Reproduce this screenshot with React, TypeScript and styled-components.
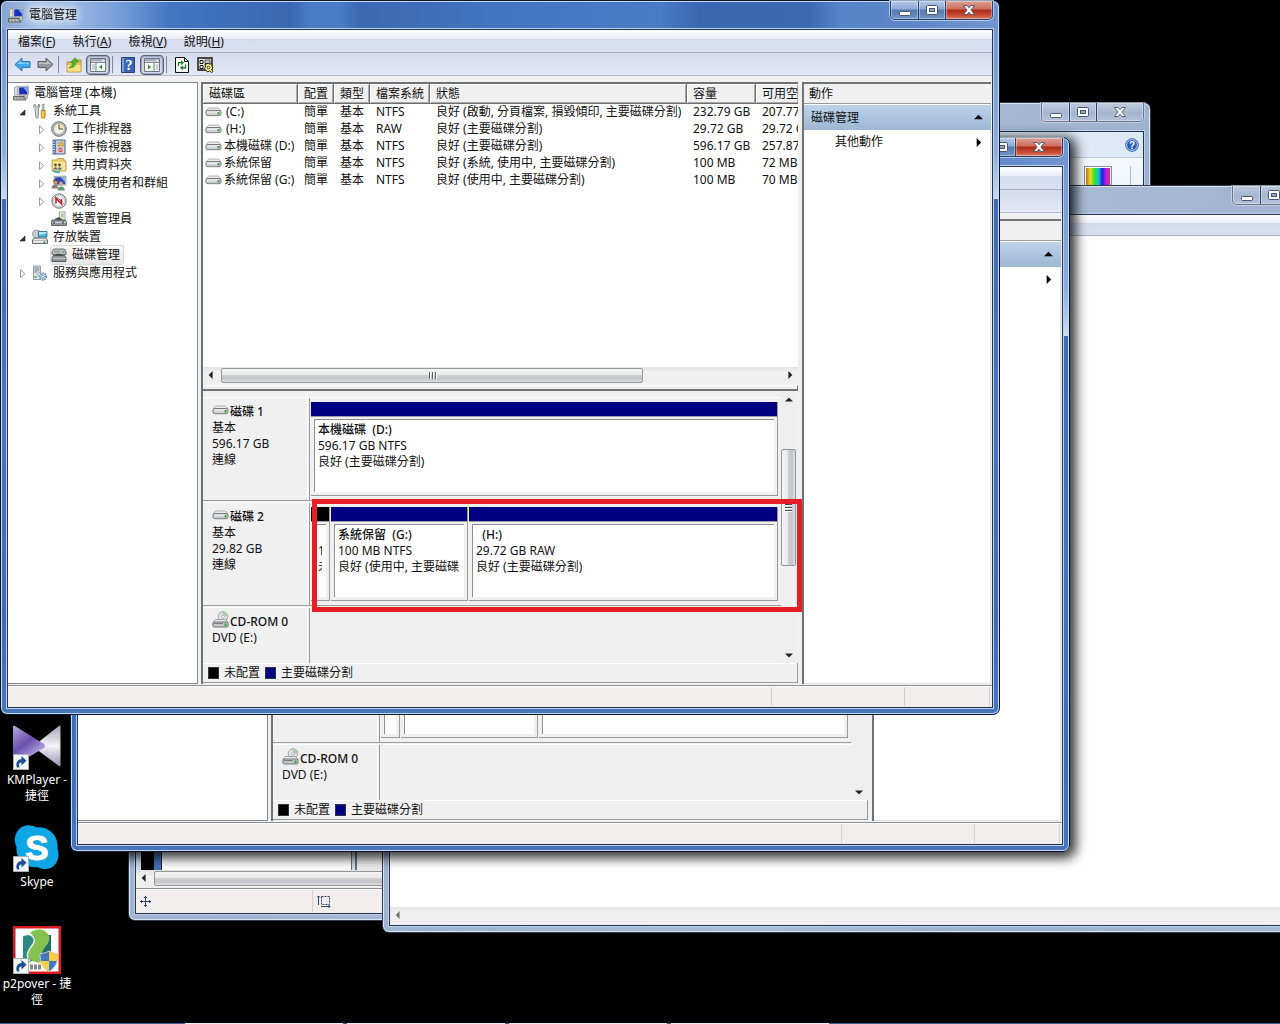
import React from 'react';
import styled, { createGlobalStyle, css } from 'styled-components';

const GlobalStyle = createGlobalStyle`
  *, *::before, *::after { box-sizing: border-box; }
  body {
    margin: 0;
    background: #000;
    color: #111;
    font: 12px/16px "Noto Sans", "Noto Sans CJK TC", sans-serif;
  }
  button {
    font: inherit;
    color: inherit;
    border: 0;
    padding: 0;
    background: none;
  }
  svg { display: block; flex: none; }
`;

/* ---------- desktop ---------- */

const Desktop = styled.main`
  position: relative;
  min-height: 100vh;
  overflow: hidden;
  background: #000;
`;

const Shortcuts = styled.nav`
  position: absolute;
  left: 0;
  top: 722px;
  width: 74px;
  display: grid;
  grid-auto-rows: 102px;
`;

const Shortcut = styled.button`
  display: flex;
  flex-direction: column;
  align-items: center;
  justify-content: flex-start;
  gap: 2px;
  color: #fff;
  text-align: center;
`;

const Taskbar = styled.footer`
  position: absolute;
  left: 0;
  right: 0;
  bottom: 0;
  height: 1px;
  display: flex;
  gap: 4px;
  padding-left: 185px;
  background: #3f5f94;
`;

const TaskEdge = styled.span`
  width: 158px;
  background: #e6ebf5;
`;

/* ---------- window frame ---------- */

const activeGlass = css`
  border-color: #0c1830;
  box-shadow: inset 0 0 0 1px #c4d8f2;
  background:
    linear-gradient(90deg, #86a5d4 0, #a9c2e6 40px, #8dafdf 90px, #6a95d3 130px, #4375c0 17%, #3c6bb5 26%, #3a68b0 29%, #4a7cc6 31%, #4a7bc5 34%, #3b69b1 36%, #4475c0 50%, #4a7bc5 66%, #3a68b0 70%, #3c6ab1 81%, #5484c9 84%, #5d86c8 91%, #7396d0 100%) 0 0 / 100% 28px no-repeat,
    linear-gradient(180deg, #7093cd 0, #7fa0d5 70px, #8eabd9 150px, #cbdcf2 198px, #3f6cb2 198px, #4776bc 420px, #3f6cb2 620px, #4876bb 100%);
`;

const inactiveGlass = css`
  border-color: #2c3a50;
  box-shadow: inset 0 0 0 1px #dbe5f2;
  background: linear-gradient(115deg, #a8b9d3 0, #9fb2cf 30%, #a9bad4 55%, #9db0cd 75%, #a9bad3 100%);
`;

const Frame = styled.section<{ $x: number; $y: number; $w: number; $h: number; $active?: boolean; $shadow?: boolean }>`
  position: absolute;
  left: ${p => p.$x}px;
  top: ${p => p.$y}px;
  width: ${p => p.$w}px;
  height: ${p => p.$h}px;
  display: flex;
  flex-direction: column;
  padding: 0 6px 6px;
  border: 1px solid;
  border-radius: 7px;
  ${p => (p.$active ? activeGlass : inactiveGlass)}
  ${p => p.$shadow && css`box-shadow: inset 0 0 0 1px #c4d8f2, 3px 3px 12px 3px rgba(0, 0, 0, 0.8);`}
`;

const TitleBar = styled.header`
  flex: none;
  height: 28px;
  display: flex;
  justify-content: space-between;
  align-items: flex-start;
`;

const Title = styled.h1`
  margin: 0;
  padding: 6px 0 0 1px;
  display: flex;
  gap: 5px;
  font-size: 12px;
  line-height: 16px;
  font-weight: 400;
  text-shadow: 0 0 6px #fff, 0 0 10px #fff, 0 0 12px #e4eefb;
`;

const Client = styled.div`
  flex: 1;
  min-height: 0;
  display: flex;
  flex-direction: column;
  border: 1px solid #22344f;
  box-shadow: 0 0 0 1px #bdd2ee;
  background: #f0f0f0;
  overflow: hidden;
`;

const Controls = styled.div<{ $active?: boolean }>`
  display: flex;
  height: 19px;
  border: 1px solid ${p => (p.$active ? '#27406b' : '#65778f')};
  border-top: 0;
  border-radius: 0 0 5px 5px;
  overflow: hidden;
  box-shadow: 0 0 0 1px ${p => (p.$active ? 'rgba(214,228,247,.7)' : 'rgba(226,234,244,.5)')};
`;

const controlFill = {
  blue: 'linear-gradient(180deg, #b3c8e6 0, #8eabd6 45%, #5478b0 50%, #7396c9 100%)',
  red: 'linear-gradient(180deg, #dba397 0, #cb6d5c 45%, #ab2a17 50%, #c84e34 80%, #d98065 100%)',
  faded: 'linear-gradient(180deg, #bccadd 0, #a9bbd3 45%, #a2b5cf 50%, #b3c2d8 100%)',
};

const Control = styled.button<{ $tone: keyof typeof controlFill; $wide?: boolean }>`
  width: ${p => (p.$wide ? 47 : 27)}px;
  display: grid;
  place-items: center;
  background: ${p => controlFill[p.$tone]};
  box-shadow: inset 0 0 0 1px rgba(255, 255, 255, 0.35);
  & + & { border-left: 1px solid ${p => (p.$tone === 'faded' ? '#7587a0' : '#2d456d')}; }
`;

function WindowControls({ active }: { active?: boolean }) {
  const tone = active ? 'blue' : 'faded';
  const ink = '#4a566e';
  return (
    <Controls $active={active}>
      <Control $tone={tone} aria-label="最小化">
        <svg width="14" height="14" viewBox="0 0 14 14"><rect x="1.500" y="8.500" width="11" height="4" rx="1" fill="#fff" stroke={ink} /></svg>
      </Control>
      <Control $tone={tone} aria-label="最大化">
        <svg width="14" height="14" viewBox="0 0 14 14">
          <rect x="1.500" y="2.500" width="11" height="9" rx="1" fill="#fff" stroke={ink} />
          <rect x="4.500" y="5.500" width="5" height="3" fill="#8da5cb" stroke={ink} />
        </svg>
      </Control>
      <Control $tone={active ? 'red' : 'faded'} $wide aria-label="關閉">
        <svg width="14" height="14" viewBox="0 0 14 14">
          <path d="M1.500 2.500h3.500l2 2.300 2-2.300h3.500l-3.600 4.500 3.600 4.500H9L7 9.200l-2 2.300H1.500L5.100 7z" fill="#fff" stroke={ink} strokeWidth=".9" />
        </svg>
      </Control>
    </Controls>
  );
}

/* ---------- console bars ---------- */

const MenuBar = styled.nav`
  flex: none;
  height: 23px;
  display: flex;
  align-items: center;
  padding: 1px 0 0 2px;
  border-bottom: 1px solid #a8adbc;
  background: linear-gradient(180deg, #fff 0, #e9edf7 40%, #d5dcee 42%, #d9e0f2 100%);
`;

const MenuItem = styled.button`
  padding: 0 9px 0 8px;
  white-space: nowrap;
`;

const ToolBar = styled.div`
  flex: none;
  height: 23px;
  display: flex;
  align-items: center;
  padding: 1px 0 0 3px;
  border-bottom: 1px solid #b6bccc;
  background: linear-gradient(180deg, #d5dbed, #e3e7f5);
`;

const ToolButton = styled.button<{ $pressed?: boolean }>`
  width: ${p => (p.$pressed ? 24 : 22)}px;
  height: 20px;
  margin: 0 1px 0 0;
  display: grid;
  place-items: center;
  border-radius: 4px;
  ${p => p.$pressed && css`
    border: 1px solid #59627a;
    background: linear-gradient(180deg, #bfc6d8, #d9deeb);
    box-shadow: inset 0 0 0 1px #9aa4ba;
  `}
`;

const ToolRule = styled.span`
  width: 1px;
  height: 17px;
  margin: 0 4px 0 1px;
  background: #7e879b;
`;

/* ---------- console body ---------- */

const Body = styled.div`
  flex: 1;
  min-height: 0;
  display: grid;
  grid-template-columns: 190px minmax(0, 1fr) 189px;
  gap: 4px;
  padding: 6px 1px 1px 0;
  background: #f0f0f0;
`;

const TreePane = styled.ul`
  margin: 0;
  padding: 1px 0 0;
  list-style: none;
  border: solid #828790;
  border-width: 1px 1px 1px 0;
  background: #fff;
`;

const TreeRow = styled.li<{ $level: number }>`
  height: 18px;
  display: flex;
  align-items: center;
  padding-left: ${p => (p.$level ? p.$level * 19 - 14 : 5)}px;
`;

const Expander = styled.button`
  width: 19px;
  height: 18px;
  display: grid;
  place-items: center;
`;

const TreeLabel = styled.button<{ $selected?: boolean }>`
  height: 18px;
  display: flex;
  align-items: center;
  gap: 5px;
  padding-right: 3px;
  white-space: nowrap;
  border-radius: 2px;
  ${p => p.$selected && css`
    background: linear-gradient(180deg, #fafafb, #e6e6e8);
    box-shadow: 0 0 0 1px #d9d9d9;
  `}
`;

const MainPane = styled.div`
  min-width: 0;
  display: flex;
  flex-direction: column;
  border: solid #6f7277;
  border-width: 2px 0 0 2px;
  margin: 0 0 0 -1px;
  padding-bottom: 1px;
`;

const ListPane = styled.div`
  flex: none;
  height: 301px;
  display: flex;
  flex-direction: column;
  overflow: hidden;
  background: #fff;
`;

const VolumeTable = styled.table`
  table-layout: fixed;
  width: 100%;
  border-collapse: separate;
  border-spacing: 0;
  th, td {
    padding: 0 0 0 6px;
    font-weight: 400;
    text-align: left;
    white-space: nowrap;
    overflow: hidden;
  }
  th {
    height: 20px;
    background: #f0f0f0;
    border: solid #6f6f6f;
    border-width: 0 1px 1px 0;
    box-shadow: inset 1px 1px 0 #fff, inset -1px -1px 0 #a8a8a8;
  }
  th:last-child { border-right: 0; }
  td { height: 17px; padding-bottom: 1px; }
  td:first-child { padding-left: 2px; }
`;

const VolumeName = styled.span<{ $spaced?: boolean }>`
  display: flex;
  align-items: center;
  gap: ${p => (p.$spaced ? 4 : 2)}px;
`;

const ListSpace = styled.div`
  flex: 1;
`;

const Divider = styled.div`
  flex: none;
  height: 6px;
  background: #f0f0f0;
  border-top: 1px solid #fff;
  border-right: 1px solid #6f7277;
  border-bottom: 2px solid #6f7277;
`;

const HScroll = styled.div`
  flex: none;
  height: 18px;
  display: flex;
  align-items: center;
  border-bottom: 2px solid #f0f0f0;
  background: linear-gradient(180deg, #e4e4e6, #f1f1f1 40%, #ededed);
`;

const VScroll = styled.div`
  display: flex;
  flex-direction: column;
  padding-top: 1px;
  background: #efefef;
`;

const ScrollArrow = styled.button`
  flex: none;
  width: 16px;
  height: 16px;
  display: grid;
  place-items: center;
`;

const HThumb = styled.div<{ $w: string }>`
  width: ${p => p.$w};
  height: 15px;
  margin-left: 2px;
  display: grid;
  place-items: center;
  border: 1px solid #95979b;
  border-radius: 2px;
  background: linear-gradient(180deg, #f6f6f6 0, #e6e7e9 45%, #cdcfd3 50%, #c3c5ca 75%, #dfe0e2 100%);
`;

const VTrack = styled.div`
  flex: 1;
  padding-top: 41px;
`;

const VThumb = styled.div`
  width: 15px;
  height: 117px;
  display: grid;
  place-items: center;
  border: 1px solid #95979b;
  border-radius: 2px;
  background: linear-gradient(90deg, #f6f6f6 0, #e6e7e9 45%, #cdcfd3 50%, #c3c5ca 75%, #dfe0e2 100%);
`;

const DiskPane = styled.div`
  flex: 1;
  min-height: 0;
  display: grid;
  grid-template-columns: minmax(0, 1fr) 17px;
  background: #f0f0f0;
`;

const DiskList = styled.div`
  display: flex;
  flex-direction: column;
  padding-top: 6px;
`;

const DiskRow = styled.div<{ $fill?: boolean }>`
  ${p => (p.$fill ? css`flex: 1;` : css`height: 104px; margin-bottom: 1px; border-bottom: 1px solid #9a9a9a;`)}
  display: grid;
  grid-template-columns: 105px minmax(0, 1fr);
  gap: 1px;
  border-top: 1px solid #fff;
`;

const DiskLabel = styled.div`
  padding: 6px 0 0 9px;
  border-right: 1px solid #fff;
`;

const DiskName = styled.div<{ $optical?: boolean }>`
  display: flex;
  font-weight: 500;
  white-space: nowrap;
  gap: 1px;
  & > svg { margin-top: ${p => (p.$optical ? -3 : 1)}px; }
`;

const DiskGraph = styled.div`
  display: flex;
  align-items: flex-start;
  gap: 1px;
  padding: 4px 3px 0 1px;
  border-left: 1px solid #9a9a9a;
`;

const Volume = styled.div<{ $basis?: number }>`
  flex: ${p => (p.$basis ? `0 0 ${p.$basis}px` : '1 1 0')};
  min-width: 0;
  height: 94px;
  display: flex;
  flex-direction: column;
  border: solid #9a9a9a;
  border-width: 0 1px 1px 0;
`;

const VolumeStripe = styled.div<{ $color: string }>`
  flex: none;
  height: 15px;
  background: ${p => p.$color};
  border-bottom: 1px solid #9a9aa8;
`;

const VolumeBox = styled.div`
  flex: 1;
  margin: 2px 3px 3px;
  padding: 2px 4px 0 3px;
  border: solid #8f8f8f;
  border-width: 1px 0 0 1px;
  background: #fff;
`;

const VolumeText = styled.div<{ $strong?: boolean }>`
  min-height: 16px;
  overflow: hidden;
  white-space: pre;
  font-weight: ${p => (p.$strong ? 500 : 400)};
`;

const Legend = styled.div`
  flex: none;
  height: 20px;
  display: flex;
  align-items: center;
  padding-left: 5px;
  gap: 5px;
  border: solid #9a9a9a;
  border-width: 0 1px 1px 0;
  box-shadow: inset 0 1px 0 #fff;
`;

const Swatch = styled.span<{ $color: string }>`
  width: 11px;
  height: 12px;
  background: ${p => p.$color};
  border: 1px solid #33333f;
`;

const ActionPane = styled.aside`
  border: solid #6f7277;
  border-width: 2px 0 0 2px;
  box-shadow: inset -1px -1px 0 #e3e3e3;
  background: #fff;
`;

const ActionHeader = styled.h2`
  margin: 0;
  height: 20px;
  padding: 2px 5px;
  font-size: 12px;
  line-height: 16px;
  font-weight: 400;
  background: #f0f0f0;
  border-bottom: 1px solid #9a9a9a;
`;

const ActionGroup = styled.button`
  width: 100%;
  height: 25px;
  margin-top: 1px;
  display: flex;
  align-items: center;
  justify-content: space-between;
  padding: 0 8px 0 7px;
  background: linear-gradient(180deg, #bcd3ea, #9db6d3);
`;

const ActionItem = styled(ActionGroup)`
  height: 24px;
  padding-left: 31px;
  margin-top: 0;
  background: none;
`;

const StatusBar = styled.footer<{ $h: number }>`
  flex: none;
  height: ${p => p.$h}px;
  display: flex;
  align-items: stretch;
  padding: 1px 2px 1px 0;
  border-top: 1px solid #8a8d92;
  background: #f1eeed;
  box-shadow: inset 0 1px 0 #fff;
`;

const StatusCell = styled.div<{ $w?: number }>`
  ${p => (p.$w ? css`width: ${p.$w}px;` : css`flex: 1;`)}
  display: flex;
  align-items: center;
  padding-left: 4px;
  border-right: 1px solid #d4d1d0;
`;

const Highlight = styled.div`
  position: absolute;
  left: 312px;
  top: 499px;
  width: 490px;
  height: 113px;
  border: 5px solid #e61e25;
`;

/* ---------- icons ---------- */

const Arrow = ({ dir, fill = '#222', size = 9 }: { dir: 'up' | 'down' | 'left' | 'right'; fill?: string; size?: number }) => {
  const d = {
    up: 'M0 7 5 2l5 5z',
    down: 'M0 3h10L5 8z',
    left: 'M7 0v10L2 5z',
    right: 'M3 0v10l5-5z',
  }[dir];
  return <svg width={size} height={size} viewBox="0 0 10 10"><path d={d} fill={fill} /></svg>;
};

const HGrip = () => (
  <svg width="9" height="7" viewBox="0 0 9 7"><path d="M1.500 0v7M4.500 0v7M7.500 0v7" stroke="#5d6068" /><path d="M2.500 0v7M5.500 0v7M8.500 0v7" stroke="#fff" /></svg>
);

const VGrip = () => (
  <svg width="7" height="9" viewBox="0 0 7 9"><path d="M0 1.500h7M0 4.500h7M0 7.500h7" stroke="#44474f" /><path d="M0 2.500h7M0 5.500h7M0 8.500h7" stroke="#fff" /></svg>
);

const ComputerIcon = () => (
  <svg width="16" height="16" viewBox="0 0 16 16">
    <path d="M1.500 2.500 5 1.500v8l-3.500.8z" fill="#e3e3dc" stroke="#8b8d88" strokeWidth=".7" />
    <path d="M5 1.500 15.500 1v9L5 10.500z" fill="#d7d7d7" stroke="#9a9a9a" strokeWidth=".7" />
    <path d="M6.200 2.500 14.400 2v7l-8.200.4z" fill="#1731b8" />
    <path d="m10 2.200 4.400-.2v5.500z" fill="#7ba3ee" />
    <path d="M7 10.500h5l1 1.800H6z" fill="#a9abab" />
    <path d="M.5 11.500h10.500l2 3.500H.5z" fill="#8d908c" stroke="#52564f" strokeWidth=".8" />
    <path d="M1.500 12.700h9M1.500 14h10" stroke="#dadad4" strokeWidth=".8" strokeDasharray="2 1" />
    <path d="M11 9.500h3.500v4H12z" fill="#bfc3c6" stroke="#777" strokeWidth=".5" />
  </svg>
);

const ToolsIcon = () => (
  <svg width="16" height="16" viewBox="0 0 16 16">
    <path d="M2.800 1C1.500 2 1.400 4.500 3 5.600L4 14.500c.3 1 2 1 2.200 0l.3-9C8 4.200 8 2 6.700 1l-.4 3H4.200z" fill="#d4d8da" stroke="#70777b" strokeWidth=".8" />
    <path d="M10.300 1h1.800v6.500h-1.800z" fill="#b7bcbe" stroke="#7b8184" strokeWidth=".5" />
    <path d="M9.300 7.500h3.800v6.500c0 1.500-3.800 1.500-3.800 0z" fill="#f2b725" stroke="#a87414" strokeWidth=".8" />
    <path d="M10.800 8.500v5.500" stroke="#ffe58b" />
  </svg>
);

const ClockIcon = () => (
  <svg width="16" height="16" viewBox="0 0 16 16">
    <circle cx="8" cy="8" r="7.300" fill="#b8bcbe" stroke="#6c7174" strokeWidth="1" />
    <circle cx="8" cy="8" r="5.300" fill="#f7f2e2" stroke="#8e8b84" strokeWidth=".6" />
    <path d="M8 8h5.200A5.200 5.200 0 0 0 8 2.800z" fill="#f4dfa6" />
    <path d="M8 3.600V8h4" fill="none" stroke="#3f4c62" strokeWidth="1" />
  </svg>
);

const EventIcon = () => (
  <svg width="16" height="16" viewBox="0 0 16 16">
    <path d="M2 1h12v14H2z" fill="#c9d2de" stroke="#49618d" />
    <path d="M2 1h3v14H2z" fill="#5674ad" />
    <path d="M1 3h3M1 5.500h3M1 8h3M1 10.500h3M1 13h3" stroke="#d8dde6" />
    <path d="M6.500 4h6M6.500 6.500h6M6.500 9h5" stroke="#8090a8" />
    <path d="M10.500 2 13 7H8z" fill="#f5c12e" stroke="#b98a10" strokeWidth=".5" />
    <circle cx="9.500" cy="11" r="2.600" fill="#d8303a" stroke="#fff" strokeWidth=".6" />
    <path d="m8.500 10 2 2m0-2-2 2" stroke="#fff" strokeWidth=".8" />
  </svg>
);

const SharedIcon = () => (
  <svg width="16" height="16" viewBox="0 0 16 16">
    <path d="M1 3h5l1-1.500h6V4h2v10H1z" fill="#eecf70" stroke="#b79338" strokeWidth=".8" />
    <path d="M2 5h12v8H2z" fill="#f8e59c" />
    <circle cx="4.500" cy="8" r="1.400" fill="#5b5136" /><circle cx="8.500" cy="8" r="1.400" fill="#5b5136" />
    <path d="M2.500 12.500c.5-3 3.500-3 4 0zM6.700 12.500c.5-3 3.500-3 4 0z" fill="#46697f" />
    <path d="M2 13.500c2 2 5 2 7 1" stroke="#2da2c0" strokeWidth="1.500" fill="none" />
  </svg>
);

const UsersIcon = () => (
  <svg width="16" height="16" viewBox="0 0 16 16">
    <path d="M3 1.500 15 1v9L3 10.500z" fill="#c9cdd2" stroke="#8b8f95" strokeWidth=".7" />
    <path d="M4.200 2.600 14 2.100v7l-9.800.4z" fill="#2743bd" />
    <path d="m9.500 2.300 4.500-.2v5z" fill="#87abf0" />
    <circle cx="4.500" cy="7" r="2.200" fill="#c98f63" /><path d="M2.300 6.500c0-3 4.400-3 4.400 0L4.500 5.500z" fill="#5a3a22" />
    <path d="M.5 13.500c.2-5 6.500-5 7 0z" fill="#8d7a76" />
    <circle cx="10" cy="8.500" r="2" fill="#d7a779" />
    <path d="M6.500 15.500c.3-5.500 7-5.500 7.500 0z" fill="#5b9a78" />
  </svg>
);

const PerfIcon = () => (
  <svg width="16" height="16" viewBox="0 0 16 16">
    <circle cx="8" cy="8" r="7.200" fill="#d8dadb" stroke="#74787b" />
    <circle cx="8" cy="8" r="5.400" fill="#fff" stroke="#a6a9ac" strokeWidth=".6" />
    <path d="M5 10.500V5l5.500 6V6" fill="none" stroke="#c71f26" strokeWidth="1.600" />
    <path d="M6 4.500 11.500 9" stroke="#2c3440" strokeWidth=".8" />
  </svg>
);

const DeviceIcon = () => (
  <svg width="16" height="16" viewBox="0 0 16 16">
    <path d="M8.500 .8h5.500v8H8.500z" fill="#e8f0e4" stroke="#8a9a88" strokeWidth=".8" />
    <path d="M10 2.500h2.500v4H10z" fill="#a4c795" />
    <path d="M4 8 7.500 6 11 8v1.500H4z" fill="#4f575b" />
    <path d="M1 9h13l1.500 2v3.500H.5V11z" fill="#8c969b" stroke="#4a5256" strokeWidth=".8" />
    <path d="M1 11.300h14" stroke="#d4dadd" strokeWidth="1.200" />
    <path d="M3 10.500v2M12 10.500v2" stroke="#23282b" strokeWidth="1.200" />
  </svg>
);

const StorageIcon = () => (
  <svg width="16" height="16" viewBox="0 0 16 16">
    <circle cx="4.500" cy="5" r="4" fill="#c9cfd2" stroke="#848b90" strokeWidth=".8" />
    <circle cx="4.500" cy="5" r="1.200" fill="#fff" stroke="#848b90" strokeWidth=".5" />
    <path d="M6.500 2.500H15v5.500H6.500z" fill="#49b7dd" stroke="#2b6a88" strokeWidth=".8" />
    <path d="M7 3h7.500v1.500L7 6z" fill="#b3e7f6" />
    <path d="M2 9h12l1.500 2v3.500H.5V11z" fill="#e4e6e7" stroke="#565b60" strokeWidth=".9" />
    <path d="M1 11.500h14" stroke="#a3a7ab" strokeWidth=".7" />
    <path d="M11.500 12.500h2v1.500h-2z" fill="#2fa336" />
  </svg>
);

const DiskMgmtIcon = () => (
  <svg width="16" height="16" viewBox="0 0 16 16">
    <path d="M2.500 2h11L15 4.500V7.500H1V4.500z" fill="#b9bdbe" stroke="#5e6366" strokeWidth=".9" />
    <path d="M4 9c0-3 8-3 8 0z" fill="#3b4144" />
    <path d="M2.500 8.500h11L15 11v3.500H1V11z" fill="#8e9597" stroke="#494e50" strokeWidth=".9" />
    <path d="M1.500 11.500h13" stroke="#c5c8c9" strokeWidth="1.200" />
    <path d="M11.500 4.500h2v1.500h-2z" fill="#44ad3c" />
    <path d="M3 4.800h6" stroke="#83888b" />
  </svg>
);

const ServicesIcon = () => (
  <svg width="16" height="16" viewBox="0 0 16 16">
    <path d="M1.500 1h7v13.500h-7z" fill="#dce2e8" stroke="#7c8a99" strokeWidth=".8" />
    <path d="M2.500 3h5M2.500 5h5M2.500 7h3" stroke="#5f788f" />
    <path d="M2.500 12h2" stroke="#39a13e" strokeWidth="1.500" />
    <circle cx="7.500" cy="9.500" r="2" fill="#d5dee6" stroke="#7393ae" strokeDasharray="1 .7" />
    <circle cx="11" cy="11.500" r="3.300" fill="#b5cfe4" stroke="#6b94b5" strokeWidth="1.800" strokeDasharray="1.400 1" />
    <circle cx="11" cy="11.500" r="1.200" fill="#fff" stroke="#5583a8" strokeWidth=".6" />
  </svg>
);

const DriveIcon = () => (
  <svg width="17" height="10" viewBox="0 0 17 10">
    <path d="M3.500 1h10L16 4H1z" fill="#eceded" stroke="#9b9d9f" strokeWidth=".8" />
    <rect x=".9" y="3.500" width="15.200" height="5.200" rx="2" fill="#cfd1d2" stroke="#6d7073" strokeWidth=".9" />
    <path d="M2 5h12" stroke="#f7f7f7" />
    <path d="M12.500 5h2v2.500h-2z" fill="#3aa33f" />
  </svg>
);

const DiscDriveIcon = () => (
  <svg width="17" height="17" viewBox="0 0 17 17">
    <circle cx="11" cy="5.500" r="4.800" fill="#dfe3e2" stroke="#8d9291" strokeWidth=".8" />
    <path d="M11 .8A4.800 4.800 0 0 1 15.700 5l-4.700.5z" fill="#a9cfae" />
    <circle cx="11" cy="5.500" r="1.400" fill="#fff" stroke="#8d9291" strokeWidth=".6" />
    <path d="M3.500 8.500h10L16 11.500H1z" fill="#eceded" fillOpacity=".9" stroke="#8b8e90" strokeWidth=".8" />
    <rect x=".9" y="11" width="15.200" height="5" rx="1.500" fill="#c6c9ca" stroke="#64686b" strokeWidth=".9" />
    <path d="M2 12.600h9" stroke="#777" />
    <path d="M12.500 12.500h2v2.500h-2z" fill="#3aa33f" />
  </svg>
);

const BackIcon = ({ on }: { on?: boolean }) => (
  <svg width="17" height="15" viewBox="0 0 17 15">
    <path d={on ? 'M1 7.500 8 1v3.500h8v6H8V14z' : 'M16 7.500 9 1v3.500H1v6h8V14z'} fill={on ? '#3ea6e8' : '#969799'} stroke={on ? '#2d78bd' : '#5e6063'} strokeLinejoin="round" />
    <path d={on ? 'M3 7 7 3.300V5.500h8V7z' : 'M14 7 10 3.300V5.500H2V7z'} fill="#fff" fillOpacity=".4" />
  </svg>
);

const FolderUpIcon = () => (
  <svg width="16" height="16" viewBox="0 0 16 16">
    <path d="M1 5h7l1.500-2H15v12H1z" fill="#e2bd58" stroke="#a9892f" strokeWidth=".8" />
    <path d="M1.500 8h13v6.500h-13z" fill="#f6de86" />
    <path d="M3 10.500c2-.5 3.500-2.500 4-5H4.500L9 .8l3.500 4.200H10c-.3 4-3 6.500-7 5.500z" fill="#55b52c" stroke="#2f7e15" strokeWidth=".6" />
  </svg>
);

const PaneIcon = ({ side }: { side: 'left' | 'right' }) => (
  <svg width="16" height="14" viewBox="0 0 16 14">
    <path d="M.5.5h15v13H.5z" fill="#fff" stroke="#6c7484" />
    <path d="M1 1h14v2.500H1z" fill="#a6aebd" />
    <path d="M12 2.200h2.500" stroke="#fff" />
    <path d="M1 4.500h14" stroke="#7f8796" />
    {side === 'left' ? (
      <><path d="M6 5v8.500" stroke="#6c7484" /><path d="M2 7h3M2 9h3M2 11h3" stroke="#9ba3b2" /><path d="M12 6.500v5L9 9z" fill="#28962b" /></>
    ) : (
      <><path d="M10 5v8.500" stroke="#6c7484" /><path d="M11.500 7h3M11.500 9h3M11.500 11h3" stroke="#9ba3b2" /><path d="M4 6.500v5L7 9z" fill="#28962b" /></>
    )}
  </svg>
);

const HelpIcon = () => (
  <svg width="14" height="16" viewBox="0 0 14 16">
    <path d="M.5.5h13v15H.5z" fill="#3c64b4" stroke="#24407f" />
    <path d="M1 1h2v14H1z" fill="#7f9fdd" />
    <text x="8" y="13" textAnchor="middle" fontFamily="Liberation Serif, serif" fontWeight="700" fontSize="14" fill="#fff">?</text>
  </svg>
);

const RefreshIcon = () => (
  <svg width="14" height="16" viewBox="0 0 14 16">
    <path d="M.5.5h9l4 4v11H.5z" fill="#fff" stroke="#111" />
    <path d="M9.500.5v4h4" fill="none" stroke="#111" />
    <path d="M3.500 9V5.700h3M10.500 7.500v3.300H7" fill="none" stroke="#117a18" strokeWidth="1.300" />
    <path d="M6.200 3.200v5L9 5.700zM7.800 8.300v5L5 10.800z" fill="#117a18" />
  </svg>
);

const SettingsIcon = () => (
  <svg width="17" height="16" viewBox="0 0 17 16">
    <path d="M1 1h14v12H1z" fill="#efefe8" stroke="#111" strokeWidth="1.400" />
    <path d="M3 3.500h3v3H3zM3 8.500h3v3H3z" fill="#fff" stroke="#111" />
    <path d="M8 3h5v3.500H8z" fill="#c8c8c0" stroke="#555" />
    <path d="M8 7h2l1-1 1.500 1H15v2.500l1 1.500-1.500 1.500 1.500 2-1.500 1-2-1.500-2 1-1-1.500L7 12l1.500-2z" fill="#f3ec7a" stroke="#111" strokeWidth=".9" />
    <circle cx="11.500" cy="10.500" r="1.300" fill="#fff" stroke="#111" strokeWidth=".8" />
  </svg>
);

const ShortcutBadge = () => (
  <>
    <path d="M.5 32.500h15v15H.5z" fill="#f4f5f7" stroke="#a9adb5" />
    <path d="M4 45.500c-2-5 1-8 4.500-8.500v-3l5 4.800-5 4.700v-3C6.500 40.500 5.300 42 6.500 45.500z" fill="#1d4e9c" />
  </>
);

const KMPlayerIcon = () => (
  <svg width="48" height="48" viewBox="0 0 48 48">
    <defs>
      <linearGradient id="kmL" x1="0" y1="0" x2=".6" y2="1"><stop offset="0" stopColor="#b9a9e0" /><stop offset=".5" stopColor="#6a4fae" /><stop offset="1" stopColor="#cfc4ee" /></linearGradient>
      <linearGradient id="kmR" x1="0" y1="0" x2="0" y2="1"><stop offset="0" stopColor="#a8a4b2" /><stop offset=".5" stopColor="#f3f1f8" /><stop offset="1" stopColor="#9d93b4" /></linearGradient>
    </defs>
    <path d="M46.500 3.500q1-.5 1 1v39q0 1.500-1.500.5L23 27q-3-3 0-5z" fill="url(#kmR)" />
    <path d="M0 5q0-2 2-1l29 18q2 2 0 4L2 43q-2 1-2-1z" fill="url(#kmL)" />
    <ShortcutBadge />
  </svg>
);

const SkypeIcon = () => (
  <svg width="48" height="48" viewBox="0 0 48 48">
    <path d="M13 1.500c4-.5 8 .5 10.500 2C36 2 46 12 44.500 25c3.500 9-2 20-12.500 20-3 0-5-.8-7-1.800C12 44.500 2.500 35 3.500 23-1 14 4 3 13 1.500z" fill="#0fa6e6" />
    <text x="24" y="36" textAnchor="middle" fontFamily="Liberation Sans, sans-serif" fontWeight="700" fontSize="35" fill="#fff" stroke="#fff" strokeWidth="1">S</text>
    <ShortcutBadge />
  </svg>
);

const P2POverIcon = () => (
  <svg width="48" height="48" viewBox="0 0 48 48">
    <path d="M1 1h46v46H1z" fill="#fff" stroke="#dd1a20" strokeWidth="3" />
    <path d="M10 9h28v26H10z" fill="#1f6e68" />
    <path d="M10 10C18 5 24 12 19 19c-5 6-6 12-1 17h-8z" fill="#2c8a80" />
    <path d="M17 7c5-5 16-5 19 3 2 8-6 11-7 17-.5 4 1 6 3 9-8 2-17-1-17-8 0-6 6-9 7-14 .5-3-2-5-5-7z" fill="#84c34d" />
    <path d="M10 10c7-5 14 2 10 8-5 7-8 11-3 17" fill="none" stroke="#f2f8f2" strokeWidth="1.500" />
    <path d="M17 41h12" stroke="#888" strokeWidth="5" strokeDasharray="3 1" />
    <path d="M36 25c3 2 6 2.500 9 2.500 0 8-2 14-9 18-7-4-9-10-9-18 3 0 6-.5 9-2.500z" fill="#3f77c0" stroke="#c8ced6" />
    <path d="M36 25c3 2 6 2.500 9 2.500l-.5 7.500H36zM36 35v10.500c-5-3-7.500-6-8.500-10.500z" fill="#f6cf45" />
    <ShortcutBadge />
  </svg>
);

/* ---------- data ---------- */

interface TreeNode { label: string; level: number; icon: React.FC; open?: boolean; leaf?: boolean; selected?: boolean }
interface VolumeEntry { name: string; fs: string; status: string; size: string; free: string }
interface Partition { basis?: number; color: string; lines: [string, string, string] }
interface Disk { name: string; lines: string[]; optical?: boolean; partitions: Partition[] }

const tree: TreeNode[] = [
  { label: '電腦管理 (本機)', level: 0, icon: ComputerIcon, leaf: true },
  { label: '系統工具', level: 1, icon: ToolsIcon, open: true },
  { label: '工作排程器', level: 2, icon: ClockIcon },
  { label: '事件檢視器', level: 2, icon: EventIcon },
  { label: '共用資料夾', level: 2, icon: SharedIcon },
  { label: '本機使用者和群組', level: 2, icon: UsersIcon },
  { label: '效能', level: 2, icon: PerfIcon },
  { label: '裝置管理員', level: 2, icon: DeviceIcon, leaf: true },
  { label: '存放裝置', level: 1, icon: StorageIcon, open: true },
  { label: '磁碟管理', level: 2, icon: DiskMgmtIcon, leaf: true, selected: true },
  { label: '服務與應用程式', level: 1, icon: ServicesIcon },
];

const volumes: VolumeEntry[] = [
  { name: '(C:)', fs: 'NTFS', status: '良好 (啟動, 分頁檔案, 損毀傾印, 主要磁碟分割)', size: '232.79 GB', free: '207.77 GB' },
  { name: '(H:)', fs: 'RAW', status: '良好 (主要磁碟分割)', size: '29.72 GB', free: '29.72 GB' },
  { name: '本機磁碟 (D:)', fs: 'NTFS', status: '良好 (主要磁碟分割)', size: '596.17 GB', free: '257.87 GB' },
  { name: '系統保留', fs: 'NTFS', status: '良好 (系統, 使用中, 主要磁碟分割)', size: '100 MB', free: '72 MB' },
  { name: '系統保留 (G:)', fs: 'NTFS', status: '良好 (使用中, 主要磁碟分割)', size: '100 MB', free: '70 MB' },
];

const NAVY = '#000080';

const opticalDisk: Disk = { name: 'CD-ROM 0', lines: ['DVD (E:)'], optical: true, partitions: [] };

const frontDisks: Disk[] = [
  {
    name: '磁碟 1',
    lines: ['基本', '596.17 GB', '連線'],
    partitions: [{ color: NAVY, lines: ['本機磁碟  (D:)', '596.17 GB NTFS', '良好 (主要磁碟分割)'] }],
  },
  {
    name: '磁碟 2',
    lines: ['基本', '29.82 GB', '連線'],
    partitions: [
      { basis: 19, color: '#000', lines: ['', '100 MB', '未配置'] },
      { basis: 137, color: NAVY, lines: ['系統保留  (G:)', '100 MB NTFS', '良好 (使用中, 主要磁碟分割)'] },
      { color: NAVY, lines: ['  (H:)', '29.72 GB RAW', '良好 (主要磁碟分割)'] },
    ],
  },
  opticalDisk,
];

const rearDisks: Disk[] = frontDisks.map(d =>
  d.optical ? d : { name: '', lines: [], partitions: d.partitions.map(p => ({ ...p, lines: ['', '', ''] })) },
);

const columns: [string, number | undefined][] = [
  ['磁碟區', 95], ['配置', 36], ['類型', 36], ['檔案系統', 60], ['狀態', 257], ['容量', 69], ['可用空間', undefined],
];

const menus: [string, string][] = [['檔案', 'F'], ['執行', 'A'], ['檢視', 'V'], ['說明', 'H']];

/* ---------- computer management window ---------- */

function ConsoleTree() {
  return (
    <>
      {tree.map(n => (
        <TreeRow key={n.label} $level={n.leaf && n.level ? n.level + 1 : n.level}>
          {!n.leaf && (
            <Expander aria-label={(n.open ? '摺疊 ' : '展開 ') + n.label}>
              <svg width="9" height="9" viewBox="0 0 9 9">
                {n.open
                  ? <path d="M7 3v5H2z" fill="#333" stroke="#222" strokeWidth=".6" />
                  : <path d="M2.500.8 6.800 4.800 2.500 8.700z" fill="#fff" stroke="#9a9a9a" />}
              </svg>
            </Expander>
          )}
          <TreeLabel $selected={n.selected}><n.icon />{n.label}</TreeLabel>
        </TreeRow>
      ))}
    </>
  );
}

function VolumeList() {
  return (
    <VolumeTable>
      <colgroup>{columns.map(([c, w]) => <col key={c} width={w} />)}</colgroup>
      <thead><tr>{columns.map(([c]) => <th key={c} scope="col">{c}</th>)}</tr></thead>
      <tbody>
        {volumes.map(v => (
          <tr key={v.name}>
            <td><VolumeName $spaced={v.name.startsWith('(')}><DriveIcon />{v.name}</VolumeName></td>
            <td>簡單</td><td>基本</td><td>{v.fs}</td><td>{v.status}</td><td>{v.size}</td><td>{v.free}</td>
          </tr>
        ))}
      </tbody>
    </VolumeTable>
  );
}

function DiskMap({ disks }: { disks: Disk[] }) {
  return (
    <DiskPane>
      <DiskList>
        {disks.map((d, i) => (
          <DiskRow key={i} $fill={d.optical}>
            <DiskLabel>
              {d.name && <DiskName $optical={d.optical}>{d.optical ? <DiscDriveIcon /> : <DriveIcon />}{d.name}</DiskName>}
              {d.lines.map(l => <div key={l}>{l}</div>)}
            </DiskLabel>
            <DiskGraph>
              {d.partitions.map((p, j) => (
                <Volume key={j} $basis={p.basis}>
                  <VolumeStripe $color={p.color} />
                  <VolumeBox>
                    {p.lines.map((l, k) => <VolumeText key={k} $strong={k === 0}>{l}</VolumeText>)}
                  </VolumeBox>
                </Volume>
              ))}
            </DiskGraph>
          </DiskRow>
        ))}
      </DiskList>
      <VScroll>
        <ScrollArrow aria-label="向上捲動"><Arrow dir="up" size={8} /></ScrollArrow>
        <VTrack><VThumb><VGrip /></VThumb></VTrack>
        <ScrollArrow aria-label="向下捲動"><Arrow dir="down" size={8} /></ScrollArrow>
      </VScroll>
    </DiskPane>
  );
}

function ManagementWindow({ x, y, front }: { x: number; y: number; front?: boolean }) {
  return (
    <Frame $x={x} $y={y} $w={1000} $h={715} $active $shadow={!front}>
      <TitleBar>
        <Title>{front && <><ComputerIcon />電腦管理</>}</Title>
        <WindowControls active />
      </TitleBar>
      <Client>
        <MenuBar>
          {front && menus.map(([m, k]) => <MenuItem key={k}>{m}(<u>{k}</u>)</MenuItem>)}
        </MenuBar>
        <ToolBar>
          {front && (
            <>
              <ToolButton aria-label="上一頁"><BackIcon on /></ToolButton>
              <ToolButton aria-label="下一頁"><BackIcon /></ToolButton>
              <ToolRule />
              <ToolButton aria-label="上移一層"><FolderUpIcon /></ToolButton>
              <ToolButton $pressed aria-label="顯示主控台樹狀目錄"><PaneIcon side="left" /></ToolButton>
              <ToolRule />
              <ToolButton aria-label="說明"><HelpIcon /></ToolButton>
              <ToolButton $pressed aria-label="顯示動作窗格"><PaneIcon side="right" /></ToolButton>
              <ToolRule />
              <ToolButton aria-label="重新整理"><RefreshIcon /></ToolButton>
              <ToolButton aria-label="設定"><SettingsIcon /></ToolButton>
            </>
          )}
        </ToolBar>
        <Body>
          <TreePane>{front && <ConsoleTree />}</TreePane>
          <MainPane>
            <ListPane>
              {front && <VolumeList />}
              <ListSpace />
              <HScroll>
                <ScrollArrow aria-label="向左捲動"><Arrow dir="left" size={8} /></ScrollArrow>
                <ListSpace><HThumb $w="75%"><HGrip /></HThumb></ListSpace>
                <ScrollArrow aria-label="向右捲動"><Arrow dir="right" size={8} /></ScrollArrow>
              </HScroll>
            </ListPane>
            <Divider />
            <DiskMap disks={front ? frontDisks : rearDisks} />
            <Legend>
              <Swatch $color="#000" />未配置<Swatch $color={NAVY} />主要磁碟分割
            </Legend>
          </MainPane>
          <ActionPane>
            <ActionHeader>{front && '動作'}</ActionHeader>
            <ActionGroup aria-label="磁碟管理"><span>{front && '磁碟管理'}</span><Arrow dir="up" fill="#000" size={9} /></ActionGroup>
            <ActionItem aria-label="其他動作"><span>{front && '其他動作'}</span><Arrow dir="right" fill="#000" size={9} /></ActionItem>
          </ActionPane>
        </Body>
        <StatusBar $h={22}>
          <StatusCell /><StatusCell $w={133} /><StatusCell $w={85} />
        </StatusBar>
      </Client>
    </Frame>
  );
}

/* ---------- paint window ---------- */

const RibbonTabs = styled.div`
  flex: none;
  height: 26px;
  display: flex;
  align-items: center;
  justify-content: flex-end;
  padding-right: 4px;
  border-bottom: 1px solid #b7c6d8;
  background: #dfe9f6;
`;

const Ribbon = styled.div`
  flex: none;
  height: 92px;
  display: flex;
  justify-content: flex-end;
  gap: 18px;
  padding: 8px 12px 4px 0;
  border-bottom: 1px solid #b7c6d8;
  background: linear-gradient(180deg, #f4f8fd, #e3edf8);
`;

const Spectrum = styled.button`
  width: 28px;
  height: 28px;
  border: 1px solid #8b8f99;
  box-shadow: inset 0 0 0 1px #fff;
  background: linear-gradient(90deg, #c8501c, #e8d820 20%, #2ede28 38%, #18c8d8 52%, #1822e0 66%, #d820d8 84%, #e0205c);
`;

const RibbonRule = styled.span`
  width: 1px;
  background: #a9b9cc;
`;

const Canvas = styled.div`
  flex: 1;
  display: flex;
  justify-content: flex-start;
  padding-left: 5px;
  background: #cfdcec;
`;

const Picture = styled.div`
  width: 211px;
  border-left: 13px solid #000;
  border-right: 1px solid #6f7277;
  box-shadow: inset 7px 0 0 #4373b8, inset 8px 0 0 #1d2f4d;
  background: #fff;
`;

const Backdrop = styled.div`
  flex: 1;
  margin-left: 3px;
  border-left: 2px solid #6f7277;
  background: #ececec;
`;

function PaintWindow() {
  return (
    <Frame $x={128} $y={102} $w={1023} $h={819}>
      <TitleBar><Title /><WindowControls /></TitleBar>
      <Client>
        <RibbonTabs>
          <button aria-label="說明">
            <svg width="14" height="14" viewBox="0 0 14 14">
              <circle cx="7" cy="7" r="6.300" fill="#2a5fc0" stroke="#3b6cb8" />
              <circle cx="7" cy="7" r="5.400" fill="none" stroke="#dce8fa" strokeWidth=".8" />
              <text x="7" y="11" textAnchor="middle" fontFamily="Liberation Sans, sans-serif" fontWeight="700" fontSize="10" fill="#fff">?</text>
            </svg>
          </button>
        </RibbonTabs>
        <Ribbon><Spectrum aria-label="編輯色彩" /><RibbonRule /></Ribbon>
        <Canvas><Picture /><Backdrop /></Canvas>
        <HScroll>
          <ScrollArrow aria-label="向左捲動"><Arrow dir="left" size={8} /></ScrollArrow>
          <HThumb $w="80%" />
        </HScroll>
        <StatusBar $h={25}>
          <StatusCell $w={177}>
            <svg width="11" height="11" viewBox="0 0 11 11"><path d="M5.500 0v11M0 5.500h11M4 2l1.500-1.500L7 2M4 9l1.500 1.500L7 9M2 4 .5 5.500 2 7M9 4l1.500 1.500L9 7" fill="none" stroke="#2b4468" /></svg>
          </StatusCell>
          <StatusCell>
            <svg width="14" height="13" viewBox="0 0 14 13">
              <path d="M4.500 1.500h8v8h-8z" fill="none" stroke="#2b4468" strokeDasharray="2 1" />
              <path d="M1.500 10V1M0 2.500 1.500 1 3 2.500M4 11.500h9M11.500 10l1.500 1.500-1.500 1.500" fill="none" stroke="#2b4468" />
            </svg>
          </StatusCell>
        </StatusBar>
      </Client>
    </Frame>
  );
}

/* ---------- text window ---------- */

const Page = styled.div`
  flex: 1;
  background: #fff;
`;

const TextMenu = styled(MenuBar)`
  height: 21px;
`;

function TextWindow() {
  return (
    <Frame $x={382} $y={185} $w={960} $h={748}>
      <TitleBar><Title /><WindowControls /></TitleBar>
      <Client>
        <TextMenu as="div" />
        <Page />
        <HScroll>
          <ScrollArrow aria-label="向左捲動"><Arrow dir="left" size={8} fill="#777" /></ScrollArrow>
        </HScroll>
      </Client>
    </Frame>
  );
}

/* ---------- app ---------- */

export default function App() {
  return (
    <>
      <GlobalStyle />
      <Desktop>
        <Shortcuts>
          <Shortcut><KMPlayerIcon /><span>KMPlayer -<br />捷徑</span></Shortcut>
          <Shortcut><SkypeIcon /><span>Skype</span></Shortcut>
          <Shortcut><P2POverIcon /><span>p2pover - 捷<br />徑</span></Shortcut>
        </Shortcuts>
        <PaintWindow />
        <TextWindow />
        <ManagementWindow x={70} y={137} />
        <ManagementWindow x={0} y={0} front />
        <Highlight />
        <Taskbar>
          <TaskEdge /><TaskEdge /><TaskEdge /><TaskEdge />
        </Taskbar>
      </Desktop>
    </>
  );
}
